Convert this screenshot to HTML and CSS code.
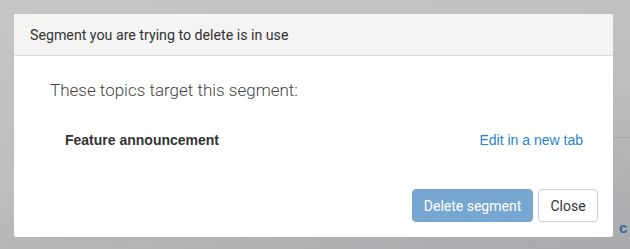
FILE: index.html
```html
<!DOCTYPE html>
<html>
<head>
<meta charset="utf-8">
<link rel="stylesheet" href="styles.css">
</head>
<body>
<div class="backdrop">
  <div class="bg-line"></div>
  <div class="bg-letter">c</div>
  <div class="modal">
    <div class="modal-header">Segment you are trying to delete is in use</div>
    <div class="modal-body">
      <p class="lead">These topics target this segment:</p>
      <div class="topic-row">
        <span class="topic-name">Feature announcement</span>
        <a class="topic-link" href="#">Edit in a new tab</a>
      </div>
    </div>
    <div class="modal-footer">
      <button class="btn btn-primary">Delete segment</button>
      <button class="btn btn-default">Close</button>
    </div>
  </div>
</div>
</body>
</html>
```
FILE: styles.css
```css
html, body {
  margin: 0;
  padding: 0;
}
body {
  width: 630px;
  height: 249px;
  overflow: hidden;
  font-family: Roboto, "Liberation Sans", sans-serif;
}
.backdrop {
  position: relative;
  width: 630px;
  height: 249px;
  padding: 14px 17px 0 14px;
  box-sizing: border-box;
  background: linear-gradient(170deg, #c6c6c7 0%, #bdbdbf 55%, #a9a9ad 100%);
}
.bg-line {
  position: absolute;
  left: 613px;
  top: 137px;
  width: 17px;
  height: 1px;
  background: #a6a6aa;
}
.bg-letter {
  position: absolute;
  left: 619px;
  top: 219px;
  font-family: "Liberation Sans", Arial, sans-serif;
  font-weight: bold;
  font-size: 15px;
  color: #2c6aa8;
}
.modal {
  position: relative;
  width: 599px;
  height: 223px;
  background: #fff;
  border-radius: 2px;
  display: flex;
  flex-direction: column;
  overflow: hidden;
}
.modal-header {
  height: 41px;
  border-bottom: 1px solid #dcdcdc;
  background: #f4f4f4;
  display: flex;
  align-items: center;
  padding-left: 16px;
  font-size: 14.2px;
  color: #333;
}
.modal-body {
  padding: 24px 30px 0 36px;
}
.lead {
  margin: 0;
  font-size: 17px;
  font-weight: 300;
  color: #444;
  line-height: 20px;
}
.topic-row {
  display: flex;
  justify-content: space-between;
  align-items: center;
  margin-top: 31px;
  padding-left: 15px;
  font-family: "Liberation Sans", Arial, sans-serif;
  font-size: 14px;
  line-height: 18px;
}
.topic-name {
  font-weight: bold;
  color: #333;
}
.topic-link {
  color: #1f83d2;
  text-decoration: none;
}
.modal-footer {
  margin-top: auto;
  display: flex;
  justify-content: flex-end;
  gap: 5px;
  padding: 0 15px 15px 0;
}
.btn {
  height: 33px;
  box-sizing: border-box;
  border-radius: 4px;
  font-family: Roboto, "Liberation Sans", sans-serif;
  font-size: 14px;
  padding: 0;
  white-space: nowrap;
  cursor: pointer;
}
.btn-primary {
  width: 121px;
  background: #76a7d1;
  border: 1px solid #76a7d1;
  color: #fff;
}
.btn-default {
  width: 60px;
  background: #fff;
  border: 1px solid #cccccc;
  color: #333;
}
```
